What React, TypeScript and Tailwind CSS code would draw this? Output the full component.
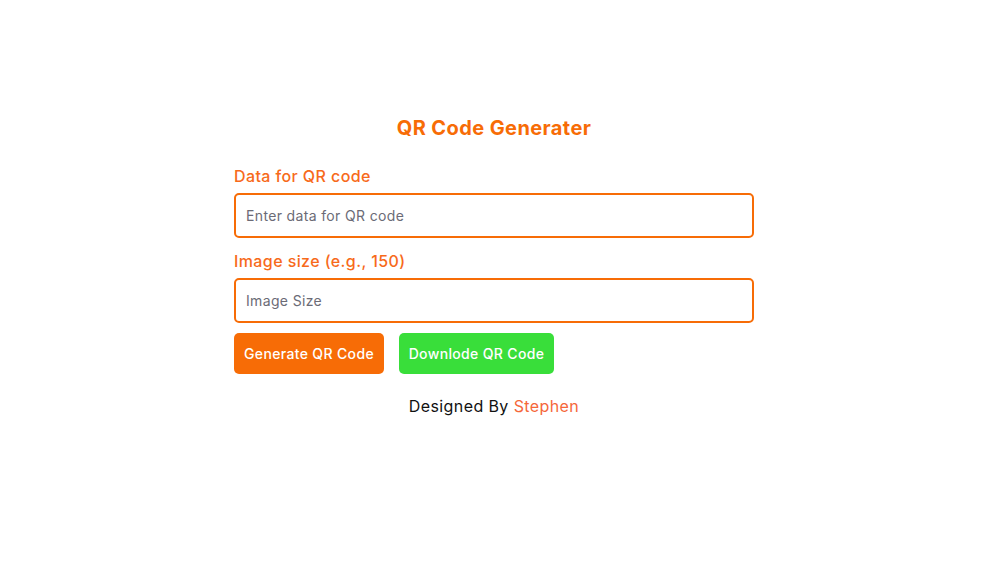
import { useState } from 'react'

export default function App() {
  const [data, setData] = useState('')
  const [size, setSize] = useState('')

  return (
    <div
      className="min-h-[569px] bg-white flex justify-center pr-[15px] pt-[113px] tracking-[0.025em]"
      style={{ fontFamily: 'Inter, "Liberation Sans", sans-serif' }}
    >
      <div className="w-[520px] flex flex-col">
        <h1 className="text-center text-[20px] leading-[30px] font-bold text-[#f76c06]">
          QR Code Generater
        </h1>

        <label htmlFor="data" className="mt-[21px] text-[16px] leading-[24px] font-medium text-[#f76a1b]">
          Data for QR code
        </label>
        <input
          id="data"
          value={data}
          onChange={(e) => setData(e.target.value)}
          placeholder="Enter data for QR code"
          className="mt-[5px] h-[45px] w-full rounded-[5px] border-2 border-[#f76c06] px-[10px] text-[14px] tracking-[0.025em] text-gray-800 placeholder:text-[#6b6b76] outline-none"
        />

        <label htmlFor="size" className="mt-[11px] text-[16px] leading-[24px] font-medium text-[#f76a1b]">
          Image size (e.g., 150)
        </label>
        <input
          id="size"
          value={size}
          onChange={(e) => setSize(e.target.value)}
          placeholder="Image Size"
          className="mt-[5px] h-[45px] w-full rounded-[5px] border-2 border-[#f76c06] px-[10px] text-[14px] tracking-[0.025em] text-gray-800 placeholder:text-[#6b6b76] outline-none"
        />

        <div className="mt-[10px] flex gap-[15px]">
          <button className="h-[41px] w-[150px] rounded-[5px] bg-[#f76c06] text-[14px] font-medium tracking-[0.025em] text-white">
            Generate QR Code
          </button>
          <button className="h-[41px] w-[155px] rounded-[5px] bg-[#39de3a] text-[14px] font-medium tracking-[0.025em] text-white">
            Downlode QR Code
          </button>
        </div>

        <p className="mt-[20px] text-center text-[16px] leading-[24px] text-[#111]">
          Designed By <span className="text-[#f5673a]">Stephen</span>
        </p>
      </div>
    </div>
  )
}
